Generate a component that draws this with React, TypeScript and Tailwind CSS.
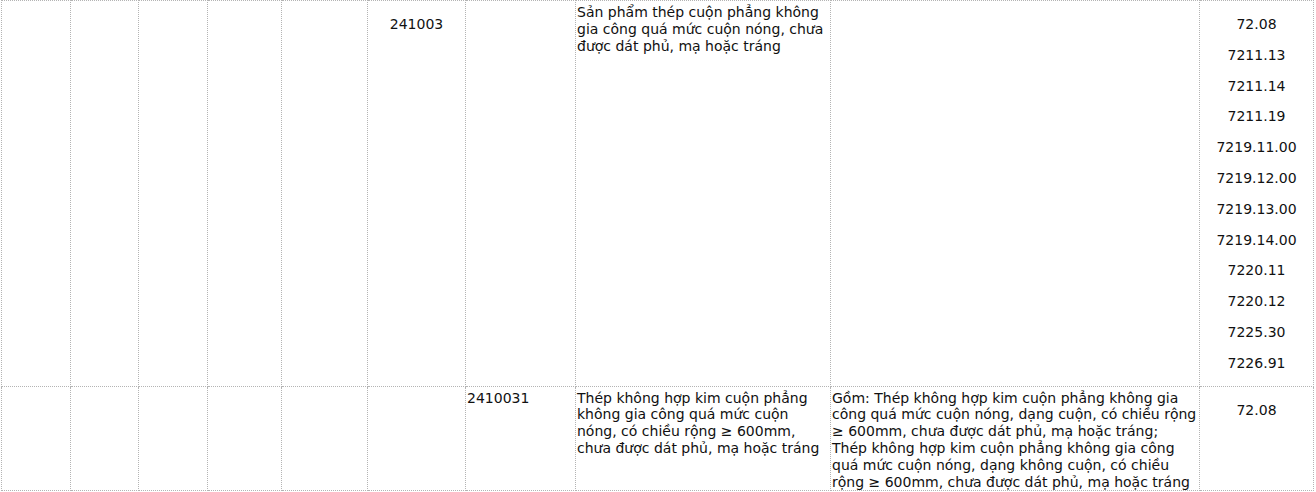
const codes = [
  "72.08",
  "7211.13",
  "7211.14",
  "7211.19",
  "7219.11.00",
  "7219.12.00",
  "7219.13.00",
  "7219.14.00",
  "7220.11",
  "7220.12",
  "7225.30",
  "7226.91",
]

const widths = [
  "w-[69px]",
  "w-[68px]",
  "w-[69px]",
  "w-[74px]",
  "w-[86px]",
  "w-[98px]",
  "w-[110px]",
  "w-[255px]",
  "w-[369px]",
  "w-[114px]",
]

// dotted grid cell; text cells sit a little lower than the paragraph ones
const cell = "border border-dotted border-[#b4b4b4] px-px pb-0 align-top"
const textCell = `${cell} pt-[3px]`
const pCell = `${cell} pt-px text-center`

export default function App() {
  return (
    <div className="bg-white text-[#111] text-[14px] leading-[16.8px] [font-family:'DejaVu_Sans',Verdana,sans-serif]">
      <table className="table-fixed border-collapse w-[1313px] ml-px">
        <colgroup>
          {widths.map((w, i) => (
            <col key={i} className={w} />
          ))}
        </colgroup>
        <tbody>
          <tr>
            <td className={cell}></td>
            <td className={cell}></td>
            <td className={cell}></td>
            <td className={cell}></td>
            <td className={cell}></td>
            <td className={pCell}>
              <p className="my-[14px]">241003</p>
            </td>
            <td className={cell}></td>
            <td className={textCell}>
              Sản phẩm thép cuộn phẳng không gia công quá mức cuộn nóng, chưa được dát phủ, mạ hoặc tráng
            </td>
            <td className={cell}></td>
            <td className={pCell}>
              {codes.map((c) => (
                <p key={c} className="my-[14px]">{c}</p>
              ))}
            </td>
          </tr>
          <tr>
            <td className={cell}></td>
            <td className={cell}></td>
            <td className={cell}></td>
            <td className={cell}></td>
            <td className={cell}></td>
            <td className={cell}></td>
            <td className={textCell}>2410031</td>
            <td className={textCell}>
              Thép không hợp kim cuộn phẳng không gia công quá mức cuộn nóng, có chiều rộng ≥ 600mm, chưa được dát phủ, mạ hoặc tráng
            </td>
            <td className={textCell}>
              Gồm: Thép không hợp kim cuộn phẳng không gia công quá mức cuộn nóng, dạng cuộn, có chiều rộng ≥ 600mm, chưa được dát phủ, mạ hoặc tráng;
              <br />
              Thép không hợp kim cuộn phẳng không gia công quá mức cuộn nóng, dạng không cuộn, có chiều rộng ≥ 600mm, chưa được dát phủ, mạ hoặc tráng
            </td>
            <td className={pCell}>
              <p className="my-[14px]">72.08</p>
            </td>
          </tr>
        </tbody>
      </table>
    </div>
  )
}
